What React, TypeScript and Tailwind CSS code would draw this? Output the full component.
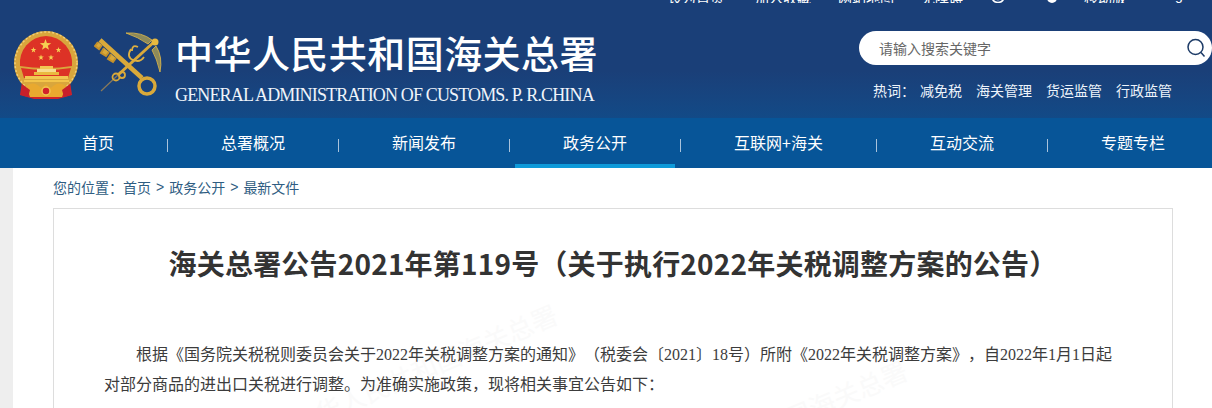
const cjk = "font-['Noto_Sans_CJK_SC',sans-serif]";

function Emblem() {
  const star = (cx: number, cy: number, r: number) => {
    const pts: string[] = [];
    for (let i = 0; i < 10; i++) {
      const a = -Math.PI / 2 + (i * Math.PI) / 5;
      const q = i % 2 === 0 ? r : r * 0.4;
      pts.push(`${cx + q * Math.cos(a)},${cy + q * Math.sin(a)}`);
    }
    return <polygon points={pts.join(" ")} fill="#f6cf52" />;
  };
  return (
    <svg className="shrink-0" width="70" height="72" viewBox="11 29 70 72">
      <path d="M22 82 L20 95 L34 99 L58 99 L72 95 L70 82 Z" fill="#d2232a" />
      <circle cx="46" cy="63" r="32" fill="#d9a63c" />
      <circle cx="46" cy="63" r="31" fill="none" stroke="#f0cf78" strokeWidth="1.5" strokeDasharray="2 2" />
      <path d="M46 36 A27 27 0 0 1 72 66 Q60 68 46 68 Q32 68 20 66 A27 27 0 0 1 46 36 Z" fill="#dd3226" />
      <path d="M21 68 Q46 72 71 68 L68 78 L24 78 Z" fill="#dd3226" />
      {star(45.5, 45, 6)}
      {star(33.5, 50, 3)}
      {star(58.5, 50, 3)}
      {star(41, 57.5, 3)}
      {star(51, 57.5, 3)}
      <rect x="40" y="66" width="13" height="3" fill="#f2c752" />
      <rect x="37" y="69" width="19" height="3" fill="#f7dc8e" />
      <rect x="34" y="72" width="25" height="3" fill="#eab93f" />
      <rect x="25" y="76" width="43" height="3" fill="#f2c752" />
      <rect x="24" y="80" width="45" height="2" fill="#f3c44a" />
      <path d="M26 86 Q34 80 41 88 L46 84 L51 88 Q58 80 66 86 L62 97 L30 97 Z" fill="#e9a92f" />
      <circle cx="46" cy="91" r="4" fill="#d2232a" stroke="#f2c752" strokeWidth="1.5" />
      <path d="M22 84 L30 90 L28 97 L21 95 Z M70 84 L62 90 L64 97 L71 95 Z" fill="#c8202a" />
    </svg>
  );
}

function KeyLogo() {
  return (
    <svg className="shrink-0 ml-[13px]" width="68" height="70" viewBox="92 33 68 70">
      <defs>
        <linearGradient id="gold" x1="0" y1="0" x2="1" y2="1">
          <stop offset="0" stopColor="#f2c64e" />
          <stop offset="1" stopColor="#b57f17" />
        </linearGradient>
      </defs>
      <path d="M124 36 Q140 35 150 43 L146 47 Q136 40 124 36 Z" fill="#8d8a5a" stroke="#e6bb46" strokeWidth="0.8" />
      <path d="M158 75 Q161 60 154 49 L150 53 Q155 62 158 75 Z" fill="#8d8a5a" stroke="#e6bb46" strokeWidth="0.8" />
      <path d="M99 94 L116 78" stroke="#8a7a5a" strokeWidth="1.2" />
      <path d="M116 78 L152 45" stroke="#d9a93a" strokeWidth="3" />
      <circle cx="153" cy="45" r="3.5" fill="#e8b93f" />
      <path d="M98 43 L140 81" stroke="#d9a93a" strokeWidth="4.5" />
      <path d="M96 45 L93 49 L97 52 L100 48 M102 51 L99 56 L104 59 L107 55 M109 57 L106 62 L111 65 L114 61" fill="#d9a93a" stroke="#c4902a" strokeWidth="2" />
      <circle cx="145" cy="89" r="8" fill="none" stroke="#d9a93a" strokeWidth="3.5" />
      <path d="M129 52 Q124 60 131 63 Q138 66 142 60 M136 50 Q130 47 130 54" fill="none" stroke="#e0b040" strokeWidth="1.8" />
      <circle cx="114" cy="80" r="3.5" fill="none" stroke="#d9a93a" strokeWidth="1.8" />
      <circle cx="120" cy="78" r="3" fill="none" stroke="#d9a93a" strokeWidth="1.8" />
    </svg>
  );
}

const navItems = ["首页", "总署概况", "新闻发布", "政务公开", "互联网+海关", "互动交流", "专题专栏"];
const hotWords = ["减免税", "海关管理", "货运监管", "行政监管"];

export default function App() {
  return (
    <div className={`h-[408px] w-[1212px] overflow-hidden bg-white [text-spacing-trim:space-all] ${cjk}`}>
      <header className="h-[118px] bg-gradient-to-b from-[#1a3f78] from-60% to-[#124a87] text-white">
        <div className="flex h-[3px] items-end overflow-hidden text-[14px] leading-[12px] whitespace-nowrap">
          <span className="ml-[668px]">设为首页</span>
          <span className="ml-[31px]">加入收藏</span>
          <span className="ml-[27px]">网站地图</span>
          <span className="ml-[27px]">无障碍</span>
          <svg className="ml-[27px]" width="16" height="14" viewBox="0 0 16 14" fill="none" stroke="white" strokeWidth="1.5"><circle cx="8" cy="7" r="6.5" /><circle cx="8" cy="7" r="3.5" /></svg>
          <svg className="ml-[41px]" width="10" height="14" viewBox="0 0 10 14" fill="white"><circle cx="5" cy="9" r="5" /></svg>
          <span className="ml-[27px]">移动版</span>
          <span className="mb-[2px] ml-[32px] font-['Liberation_Sans',sans-serif]">English</span>
        </div>
        <div className="flex items-start">
          <div className="mt-[26px] ml-[11px] flex items-center">
            <Emblem />
            <KeyLogo />
          </div>
          <div className="mt-[24px] ml-[13px] w-[424px]">
            <div className="text-[38px] leading-[50px] font-medium tracking-[0.45px] whitespace-nowrap">中华人民共和国海关总署</div>
            <div className="mt-[8px] font-['Liberation_Serif',serif] text-[18px] leading-[20px] tracking-[-0.85px] whitespace-nowrap text-[#f0f4fa]">
              GENERAL ADMINISTRATION OF CUSTOMS. P. R.CHINA
            </div>
          </div>
          <div className="mt-[28px] ml-[260px] flex w-[353px] flex-col">
            <div className="flex h-[34px] items-center justify-between rounded-full bg-white pr-[6px] pl-[20px]">
              <span className="text-[14px] text-[#666666]">请输入搜索关键字</span>
              <svg width="20" height="20" viewBox="0 0 20 20" fill="none" stroke="#1c3a66" strokeWidth="1.5">
                <circle cx="9.5" cy="9" r="7.5" />
                <path d="M15 14.5 L18.5 18.5" />
              </svg>
            </div>
            <div className="mt-[15px] flex gap-[14px] pl-[14px] text-[14px] leading-[20px] whitespace-nowrap text-[#eef4fb]">
              <span className="mr-[-7px] w-[40px]">热词：</span>
              {hotWords.map((w) => (
                <span key={w}>{w}</span>
              ))}
            </div>
          </div>
        </div>
      </header>
      <nav className="flex h-[50px] items-center bg-[#075598] pl-[29px] text-[16px] whitespace-nowrap text-white">
        {navItems.map((item, i) => (
          <div key={item} className="flex h-full items-center">
            <div className="relative flex h-full items-center px-[53px]">
              <span className="mt-[-2px]">{item}</span>
              {item === "政务公开" && <span className="absolute right-[5px] bottom-0 left-[5px] h-[4px] bg-[#0e9ad9]" />}
            </div>
            {i < navItems.length - 1 && <span className="mt-[4px] h-[13px] w-px bg-[#a9c3dc]" />}
          </div>
        ))}
      </nav>
      <div className="flex">
        <div className="h-[240px] w-[13px] shrink-0 bg-[#eeeeee]" />
        <main className="relative flex-1 overflow-hidden">
          <div className="flex h-[40px] items-center pb-[2px] pl-[40px] text-[14px] text-[#2f5d82]">
            您的位置：首页
            <span className="mx-[5px] font-['Liberation_Sans',sans-serif]">&gt;</span>
            政务公开
            <span className="mx-[5px] font-['Liberation_Sans',sans-serif]">&gt;</span>
            最新文件
          </div>
          <article className="relative ml-[40px] h-[300px] w-[1120px] overflow-hidden border border-[#dddddd]">
            <div className="absolute top-[195px] left-[238px] origin-left -rotate-[23deg] text-[26px] whitespace-nowrap text-[#fafafa]">中华人民共和国海关总署</div>
            <div className="absolute top-[251px] left-[588px] origin-left -rotate-[23deg] text-[26px] whitespace-nowrap text-[#fafafa]">中华人民共和国海关总署</div>
            <h1 className="relative mt-[34px] text-center text-[28px] leading-[40px] font-bold tracking-[0.2px] whitespace-nowrap text-[#333333]">
              海关总署公告2021年第119号（关于执行2022年关税调整方案的公告）
            </h1>
            <div className="relative mt-[57px] pr-[32px] pl-[50px] font-['Liberation_Serif','Noto_Sans_CJK_SC',serif] text-[16px] leading-[30px] text-[#3c3c3c]">
              <p className="indent-[32px]">
                根据《国务院关税税则委员会关于2022年关税调整方案的通知》（税委会〔2021〕18号）所附《2022年关税调整方案》，自2022年1月1日起
                <br />
                <span className="inline-block indent-0">对部分商品的进出口关税进行调整。为准确实施政策，现将相关事宜公告如下：</span>
              </p>
            </div>
          </article>
        </main>
      </div>
    </div>
  );
}
